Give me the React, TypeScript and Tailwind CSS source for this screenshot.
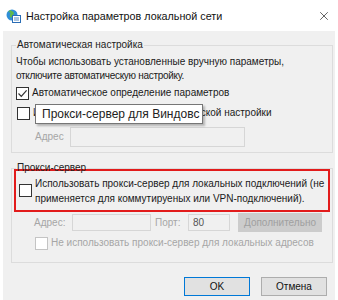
import { X } from "lucide-react";

const font = "font-['Liberation_Sans',Arial,sans-serif]";

function Box({ checked, disabled }: { checked?: boolean; disabled?: boolean }) {
  return (
    <span
      className={`flex h-[13px] w-[13px] shrink-0 items-center justify-center border bg-white ${
        disabled ? "border-[#c4c4c4]" : "border-[#333333]"
      }`}
    >
      {checked ? (
        <svg width="11" height="11" viewBox="0 0 11 11">
          <path d="M1.5 5.5 L4.3 8.3 L9.6 2.4" fill="none" stroke="#333" strokeWidth="1.2" />
        </svg>
      ) : null}
    </span>
  );
}

function NetIcon() {
  return (
    <svg width="15" height="14" viewBox="0 0 15 14">
      <circle cx="6" cy="6" r="5.5" fill="#2f8fd8" />
      <path d="M2 3.5 C4 2 5 4 4 6 C3 8 5 9 6.5 8 L8 4 C7 2 5 1.5 4 1 Z" fill="#5fb94a" />
      <rect x="6.5" y="6.5" width="8" height="7" fill="#ffffff" stroke="#2a6db5" strokeWidth="1" />
      <path d="M8 9 H13 M8 11 H13" stroke="#2a6db5" strokeWidth="0.8" />
    </svg>
  );
}

export default function App() {
  return (
    <div className={`h-[300px] w-[338px] overflow-hidden whitespace-nowrap bg-white text-[10px] leading-[14px] text-[#1a1a1a] ${font}`}>
      <div className="flex h-[31px] items-center pl-[6px] pr-[7px]">
        <NetIcon />
        <span className="ml-[5px] text-[10.75px] text-[#111]">Настройка параметров локальной сети</span>
        <X size={14} strokeWidth={1.2} className="ml-auto text-[#222]" />
      </div>

      <div className="mx-[3px] h-[269px] bg-[#f0f0f0] px-[8px] pt-[7px]">
        <fieldset className="relative h-[115px] w-[322px] border border-[#dcdcdc] px-[4px]">
          <legend className="px-[1px] text-[#222]">Автоматическая настройка</legend>
          <p className="mt-[3px]">
            Чтобы использовать установленные вручную параметры,
            <br />
            <span className="tracking-[-0.3px]">отключите автоматическую настройку.</span>
          </p>
          <div className="mt-[3px] flex items-center gap-[3px]">
            <Box checked />
            <span>Автоматическое определение параметров</span>
          </div>
          <div className="mt-[6px] flex items-center gap-[3px] pl-[1px]">
            <Box />
            <span>Использовать сценарий автоматической настройки</span>
          </div>
          <div className="mt-[7px] flex items-center pl-[19px]">
            <span className="w-[35px] text-[#a6a6a6]">Адрес</span>
            <span className="h-[20px] w-[175px] border border-[#d6d6d6]" />
          </div>
          <div className="absolute left-[23px] top-[52px] flex h-[20px] w-[168px] items-center border border-[#767676] bg-white pl-[6px] text-[12px] text-[#222] shadow-[2px_2px_2px_rgba(0,0,0,0.25)]">
            Прокси-сервер для Виндовс
          </div>
        </fieldset>

        <fieldset className="mt-[8px] h-[102px] w-[322px] border border-[#dcdcdc] px-[2px]">
          <legend className="ml-[2px] px-[1px] text-[#222]">Прокси-сервер</legend>
          <div className="-mt-[6px] flex h-[43px] w-[316px] items-center gap-[3px] border-2 border-[#e21b1b] pl-[3px]">
            <Box />
            <span className="leading-[15px]">
              Использовать прокси-сервер для локальных подключений (не
              <br />
              применяется для коммутируеных или VPN-подключений).
            </span>
          </div>
          <div className="mt-[1px] flex items-center pl-[20px] text-[#a6a6a6]">
            <span className="w-[38px]">Адрес:</span>
            <span className="h-[17px] w-[79px] border border-[#d6d6d6]" />
            <span className="ml-[4px] w-[33px]">Порт:</span>
            <span className="flex h-[17px] w-[42px] items-center border border-[#d6d6d6] pl-[4px] text-[#555]">80</span>
            <span className="ml-[8px] flex h-[19px] w-[84px] items-center justify-center bg-[#cccccc] text-[#a0a0a0]">
              Дополнительно
            </span>
          </div>
          <div className="mt-[4px] flex items-center gap-[3px] pl-[21px] text-[#a6a6a6]">
            <Box disabled />
            <span>Не использовать прокси-сервер для локальных адресов</span>
          </div>
        </fieldset>

        <div className="mt-[14px] flex justify-end gap-[11px]">
          <button className="flex h-[19px] w-[66px] items-center justify-center border border-[#0078d7] bg-[#e1e1e1] text-[#111]">
            OK
          </button>
          <button className="flex h-[19px] w-[66px] items-center justify-center border border-[#adadad] bg-[#e1e1e1] text-[#111]">
            Отмена
          </button>
        </div>
      </div>
    </div>
  );
}
